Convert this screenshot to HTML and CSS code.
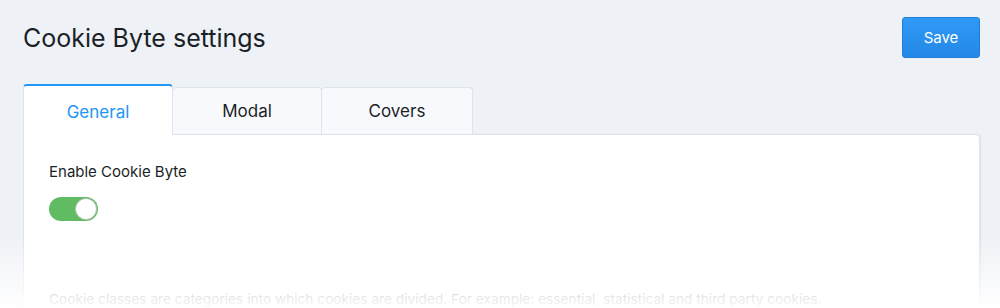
FILE: index.html
```html
<!DOCTYPE html>
<html lang="en">
<head>
    <meta charset="UTF-8">
    <meta name="viewport" content="width=device-width, initial-scale=1.0">
    <title>Cookie Byte settings</title>
    <link rel="stylesheet" href="styles.css">
</head>
<body>
    <div class="page">
        <div class="header">
            <h1 class="title">Cookie Byte settings</h1>
            <button class="save-btn">Save</button>
        </div>

        <div class="tabs">
            <div class="tab active">General</div>
            <div class="tab">Modal</div>
            <div class="tab tab-last">Covers</div>
        </div>

        <div class="panel">
            <div class="field-label">Enable Cookie Byte</div>
            <label class="switch">
                <input type="checkbox" checked>
                <span class="slider"></span>
            </label>
            <p class="hint">Cookie classes are categories into which cookies are divided. For example: essential, statistical and third party cookies.</p>
        </div>
    </div>
    <div class="fade"></div>
</body>
</html>
```

FILE: styles.css
```css
body {
    margin: 0;
    font-family: 'Inter', 'Noto Sans', sans-serif;
    background-color: #eef1f6;
    color: #1b1f27;
    height: 308px;
    overflow: hidden;
}
.page {
    padding: 17px 20px 0 23px;
}
.header {
    display: flex;
    justify-content: space-between;
    align-items: center;
}
.title {
    margin: 0;
    font-size: 25px;
    font-weight: 400;
}
.save-btn {
    width: 78px;
    height: 41px;
    border: 1px solid #1f7fd6;
    border-radius: 3px;
    background: linear-gradient(#3199f6, #2388e6);
    color: #fff;
    font-family: inherit;
    font-size: 15px;
    cursor: pointer;
}
.tabs {
    display: flex;
    align-items: flex-end;
    margin-top: 26px;
}
.tab {
    box-sizing: border-box;
    width: 149px;
    height: 47px;
    display: flex;
    justify-content: center;
    align-items: center;
    background: #f8f9fc;
    border: 1px solid #dde1ea;
    border-bottom: none;
    border-left: none;
    border-radius: 4px 4px 0 0;
    font-size: 17px;
    color: #1b1f27;
    cursor: pointer;
}
.tab-last {
    width: 151px;
}
.tab.active {
    width: 150px;
    height: 51px;
    margin-bottom: -1px;
    position: relative;
    background: #fff;
    border-left: 1px solid #dde1ea;
    border-top: 2px solid #2196f3;
    color: #2196f3;
    padding-top: 2px;
}
.panel {
    background: #fff;
    border: 1px solid #dde1ea;
    border-radius: 0 4px 0 0;
    box-shadow: 1px 0 2px rgba(0, 0, 0, 0.06);
    padding: 27px 25px 20px;
}
.field-label {
    font-size: 15px;
    font-weight: 400;
    line-height: 20px;
}
.switch {
    display: inline-block;
    position: relative;
    width: 49px;
    height: 24px;
    margin-top: 15px;
    vertical-align: top;
}
.switch input {
    display: none;
}
.slider {
    position: absolute;
    inset: 0;
    background: #60bb62;
    border-radius: 12px;
}
.slider::after {
    content: '';
    position: absolute;
    top: 1px;
    right: 1px;
    width: 20px;
    height: 20px;
    background: #fff;
    border: 1px solid #b9c2b9;
    border-radius: 50%;
}
.hint {
    margin: 70px 0 0;
    font-size: 13.7px;
    line-height: 16px;
    color: #6b7280;
}
.fade {
    position: absolute;
    left: 0;
    right: 0;
    bottom: 0;
    height: 75px;
    background: linear-gradient(rgba(255, 255, 255, 0), rgba(255, 255, 255, 0.96));
}
```
